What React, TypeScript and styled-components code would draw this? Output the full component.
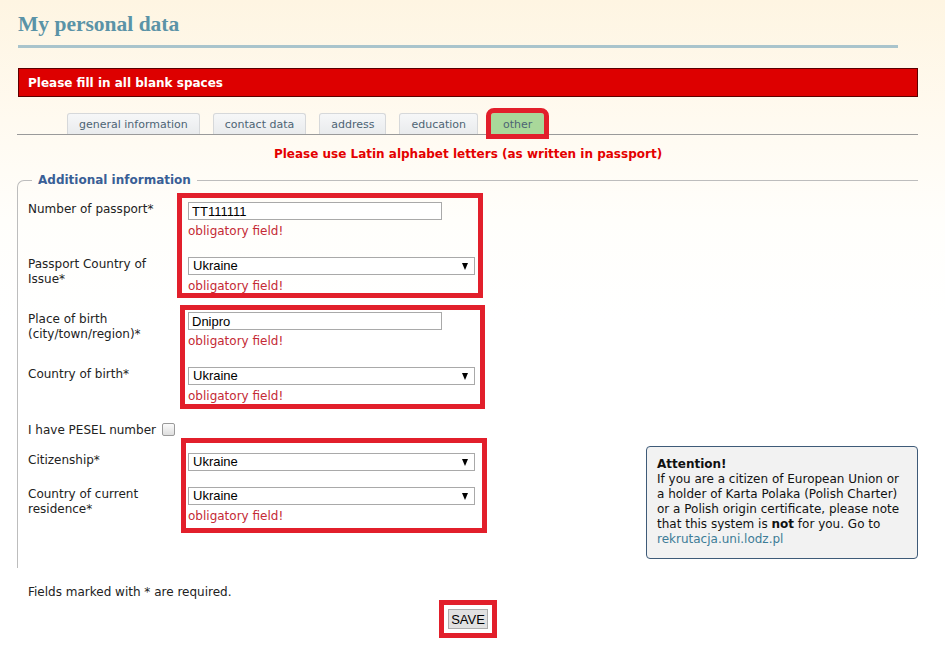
import React from "react"
import styled, { createGlobalStyle } from "styled-components"

const GlobalStyle = createGlobalStyle`
  html, body {
    margin: 0;
    padding: 0;
  }
  body {
    min-height: 646px;
    background: linear-gradient(180deg, #fef5e2 0px, #fffaf0 120px, #fffefb 220px, #ffffff 320px);
    font-family: "DejaVu Sans", Verdana, sans-serif;
    color: #222;
  }
`

const Page = styled.div`
  width: 901px;
  padding: 11px 0 0 17px;
`

const Title = styled.h1`
  margin: 0 0 0 1px;
  font-family: "Liberation Serif", "Times New Roman", serif;
  font-size: 21.5px;
  font-weight: bold;
  color: #5a93a7;
  line-height: 26px;
  padding-bottom: 8px;
  width: 880px;
  border-bottom: 3px solid #a9c4cc;
`

const Banner = styled.div`
  margin: 20px 0 0 1px;
  height: 27px;
  background: #dd0000;
  border: 1px solid #5c0000;
  color: #fff;
  font-size: 12px;
  font-weight: bold;
  line-height: 28px;
  padding-left: 9px;
`

const Tabs = styled.div`
  display: flex;
  gap: 13px;
  margin-top: 16px;
  padding-left: 50px;
  border-bottom: 1px solid #9a9a9a;
`

const Tab = styled.div<{ $active?: boolean }>`
  height: 20px;
  padding: 0 11px;
  font-size: 11px;
  line-height: 21px;
  color: #4d6474;
  background: ${(p) => (p.$active ? "#a9d89a" : "linear-gradient(#f6f7f8, #e9ebed)")};
  border: 1px solid ${(p) => (p.$active ? "#a9d89a" : "#d6d8da")};
  border-bottom: none;
  border-radius: 3px 3px 0 0;
  outline: ${(p) => (p.$active ? "5px solid #e21f2b" : "none")};
`

const Notice = styled.div`
  margin-top: 11px;
  text-align: center;
  font-size: 12px;
  font-weight: bold;
  color: #e40000;
  line-height: 16px;
  padding-left: 1px;
`

const Fieldset = styled.fieldset`
  margin: 11px 0 0 0;
  padding: 14px 0 9px 10px;
  border-style: solid;
  border-color: #bdbdbd;
  border-width: 1px 0 0 1px;
  border-top-left-radius: 7px;
  display: flex;
  align-items: flex-end;
  justify-content: space-between;
  min-width: 0;
`

const Legend = styled.legend`
  margin-left: 4px;
  padding: 0 6px;
  font-size: 12px;
  line-height: 15px;
  font-weight: bold;
  color: #395f96;
`

const FormColumn = styled.div`
  display: flex;
  flex-direction: column;
  padding-bottom: 35px;
`

type Box = { left: number; top: number; width: number; height: number }

const Group = styled.div<{ $box: Box }>`
  position: relative;

  &::after {
    content: "";
    position: absolute;
    left: ${(p) => p.$box.left}px;
    top: ${(p) => p.$box.top}px;
    width: ${(p) => p.$box.width}px;
    height: ${(p) => p.$box.height}px;
    box-sizing: border-box;
    border: 5px solid #e21f2b;
    pointer-events: none;
  }
`

const Row = styled.div<{ $after?: number }>`
  display: flex;
  align-items: flex-start;
  margin-bottom: ${(p) => p.$after ?? 18}px;
`

const Label = styled.div<{ $wide?: boolean }>`
  flex: 0 0 ${(p) => (p.$wide ? "auto" : "160px")};
  font-size: 12px;
  line-height: 15px;
  padding-right: ${(p) => (p.$wide ? "0" : "20px")};
  box-sizing: border-box;
  display: flex;
  align-items: flex-start;
`

const Control = styled.div`
  display: flex;
  flex-direction: column;
  align-items: flex-start;
`

const TextInput = styled.input`
  box-sizing: border-box;
  width: 254px;
  height: 18px;
  padding: 0 3px;
  margin: 0;
  border: 1px solid #a9a9a9;
  background: #fff;
  font-family: "Liberation Sans", Arial, sans-serif;
  font-size: 13px;
  color: #000;
`

const SelectBox = styled.div`
  position: relative;
  box-sizing: border-box;
  width: 287px;
  height: 18px;
  border: 1px solid #a9a9a9;
  background: #fff;
  font-family: "Liberation Sans", Arial, sans-serif;
  font-size: 13px;
  line-height: 16px;
  padding-left: 4px;
  color: #000;

  &::after {
    content: "";
    position: absolute;
    right: 6px;
    top: 5px;
    border-left: 3.5px solid transparent;
    border-right: 3.5px solid transparent;
    border-top: 7px solid #000;
  }
`

const ErrorText = styled.div`
  margin-top: 3px;
  font-size: 12px;
  line-height: 16px;
  color: #c42a35;
`

const Checkbox = styled.span`
  display: inline-block;
  margin: 0 0 0 6px;
  width: 11px;
  height: 11px;
  border: 1px solid #9a9a9a;
  border-radius: 2px;
  background: linear-gradient(#fbfbfb, #dedede);
`

const Attention = styled.aside`
  width: 250px;
  padding: 10px 10px 11px 10px;
  background: #f2f2f2;
  border: 1px solid #3e5a78;
  border-radius: 4px;
  font-size: 12px;
  line-height: 15px;
  color: #111;

  a {
    color: #3d7c97;
    text-decoration: none;
  }
`

const Footer = styled.div`
  margin-top: 17px;
  padding-left: 11px;
  font-size: 12px;
  line-height: 15px;
`

const SaveRow = styled.div`
  display: flex;
  justify-content: center;
  margin-top: 9px;
  padding-left: 1px;
`

const SaveButton = styled.button`
  font-family: "Liberation Sans", Arial, sans-serif;
  font-size: 13px;
  height: 20px;
  padding: 0 2px;
  background: #e1e1e1;
  border: 1px solid #adadad;
  color: #000;
  outline: 5px solid #e21f2b;
  outline-offset: 4px;
`

const tabs = ["general information", "contact data", "address", "education", "other"]

export default function App() {
  return (
    <>
      <GlobalStyle />
      <Page>
        <Title>My personal data</Title>
        <Banner>Please fill in all blank spaces</Banner>
        <Tabs>
          {tabs.map((t) => (
            <Tab key={t} $active={t === "other"}>
              {t}
            </Tab>
          ))}
        </Tabs>
        <Notice>Please use Latin alphabet letters (as written in passport)</Notice>
        <Fieldset>
          <Legend>Additional information</Legend>
          <FormColumn>
            <Group $box={{ left: 149, top: -9, width: 306, height: 105 }}>
              <Row>
                <Label>Number of passport*</Label>
                <Control>
                  <TextInput defaultValue="TT111111" />
                  <ErrorText>obligatory field!</ErrorText>
                </Control>
              </Row>
              <Row $after={0}>
                <Label>Passport Country of Issue*</Label>
                <Control>
                  <SelectBox>Ukraine</SelectBox>
                  <ErrorText>obligatory field!</ErrorText>
                </Control>
              </Row>
            </Group>
            <Row $after={0} style={{ height: 18 }} />
            <Group $box={{ left: 152, top: -7, width: 305, height: 104 }}>
              <Row>
                <Label>Place of birth (city/town/region)*</Label>
                <Control>
                  <TextInput defaultValue="Dnipro" />
                  <ErrorText>obligatory field!</ErrorText>
                </Control>
              </Row>
              <Row $after={19}>
                <Label>Country of birth*</Label>
                <Control>
                  <SelectBox>Ukraine</SelectBox>
                  <ErrorText>obligatory field!</ErrorText>
                </Control>
              </Row>
            </Group>
            <Row $after={15}>
              <Label $wide>
                I have PESEL number
                <Checkbox />
              </Label>
            </Row>
            <Group $box={{ left: 153, top: -15, width: 306, height: 95 }}>
              <Row $after={16}>
                <Label>Citizenship*</Label>
                <Control>
                  <SelectBox>Ukraine</SelectBox>
                </Control>
              </Row>
              <Row $after={0}>
                <Label>Country of current residence*</Label>
                <Control>
                  <SelectBox>Ukraine</SelectBox>
                  <ErrorText>obligatory field!</ErrorText>
                </Control>
              </Row>
            </Group>
          </FormColumn>
          <Attention>
            <b>Attention!</b>
            <br />
            If you are a citizen of European Union or a holder of Karta Polaka (Polish Charter) or a
            Polish origin certificate, please note that this system is <b>not</b> for you. Go to{" "}
            <a href="#">rekrutacja.uni.lodz.pl</a>
          </Attention>
        </Fieldset>
        <Footer>Fields marked with * are required.</Footer>
        <SaveRow>
          <SaveButton>SAVE</SaveButton>
        </SaveRow>
      </Page>
    </>
  )
}
